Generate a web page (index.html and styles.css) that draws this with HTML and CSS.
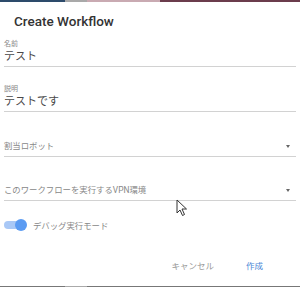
FILE: index.html
```html
<!DOCTYPE html>
<html lang="ja">
<head>
    <meta charset="UTF-8">
    <title>Create Workflow</title>
    <link rel="stylesheet" href="styles.css">
</head>
<body>

<div class="top-strip"></div>

<div class="dialog">
    <div class="dialog-title">Create Workflow</div>

    <div class="field first">
        <label class="field-label">名前</label>
        <div class="field-value">テスト</div>
    </div>
    <div class="field">
        <label class="field-label">説明</label>
        <div class="field-value">テストです</div>
    </div>
    <div class="field select">
        <div class="placeholder">割当ロボット</div>
        <span class="arrow"></span>
    </div>
    <div class="field select last">
        <div class="placeholder">このワークフローを実行するVPN環境</div>
        <span class="arrow"></span>
    </div>

    <div class="toggle-row">
        <div class="toggle"><span class="knob"></span></div>
        <span class="toggle-label">デバッグ実行モード</span>
    </div>

    <div class="actions">
        <button class="btn cancel">キャンセル</button>
        <button class="btn create">作成</button>
    </div>

    <svg class="cursor" width="12" height="18" viewBox="0 0 12 18">
        <path d="M1 1 L1 14 L4 11 L6.5 16.5 L8.5 15.5 L6 10 L10.5 10 Z" fill="#fff" stroke="#333" stroke-width="1"/>
    </svg>
</div>

<div class="bottom-strip"></div>

</body>
</html>
```

FILE: styles.css
```css
html, body {
    margin: 0;
    padding: 0;
    background-color: #fff;
}
body {
    font-family: Roboto, "Noto Sans CJK JP", sans-serif;
    width: 300px;
    height: 287px;
    overflow: hidden;
    display: flex;
    flex-direction: column;
}
.top-strip {
    height: 2px;
    background: linear-gradient(to right, #2d4b6b 0, #2d4b6b 65px, #a9a9a9 65px, #a9a9a9 87px, #c9aab2 87px, #c9aab2 160px, #6b3c4c 160px);
}
.dialog {
    position: relative;
    flex: 1;
    padding: 0 4px;
}
.dialog-title {
    padding: 10px 10px 0;
    height: 18px;
    line-height: 18px;
    font-size: 13.5px;
    font-weight: 500;
    color: #333;
}
.field {
    position: relative;
    height: 45px;
    border-bottom: 1px solid #d2d2d2;
    display: flex;
    flex-direction: column;
    justify-content: flex-end;
    padding-bottom: 2px;
    box-sizing: border-box;
}
.field.first {
    height: 37px;
}
.field.last {
    height: 44px;
}
.field-label {
    font-size: 7px;
    line-height: 9px;
    color: #888;
}
.field-value {
    font-size: 11px;
    line-height: 15px;
    color: #4a4a4a;
}
.select {
    padding-bottom: 4px;
}
.placeholder {
    font-size: 8.4px;
    line-height: 12px;
    color: #888;
}
.arrow {
    position: absolute;
    right: 6px;
    bottom: 8px;
    width: 0;
    height: 0;
    border-left: 2.5px solid transparent;
    border-right: 2.5px solid transparent;
    border-top: 3px solid #666;
}
.toggle-row {
    display: flex;
    align-items: center;
    height: 20px;
    margin-top: 14px;
}
.toggle {
    position: relative;
    width: 21px;
    height: 8px;
    border-radius: 4px;
    background-color: #a9c8f6;
}
.knob {
    position: absolute;
    right: -2px;
    top: -2px;
    width: 12px;
    height: 12px;
    border-radius: 50%;
    background-color: #5b9bf2;
}
.toggle-label {
    margin-left: 8px;
    font-size: 8.4px;
    color: #888;
}
.actions {
    display: flex;
    justify-content: flex-end;
    align-items: center;
    height: 20px;
    margin-top: 20px;
    padding-right: 33px;
}
.btn {
    background: none;
    border: none;
    padding: 0;
    font-family: inherit;
    font-size: 8.5px;
    cursor: pointer;
}
.cancel {
    color: #999;
    margin-right: 32px;
}
.create {
    color: #4a86d6;
}
.cursor {
    position: absolute;
    left: 176px;
    top: 197px;
}
.bottom-strip {
    height: 1px;
    background: linear-gradient(to right, #777 0, #777 65px, #aaa 65px, #aaa 87px, #777 87px);
}
```
